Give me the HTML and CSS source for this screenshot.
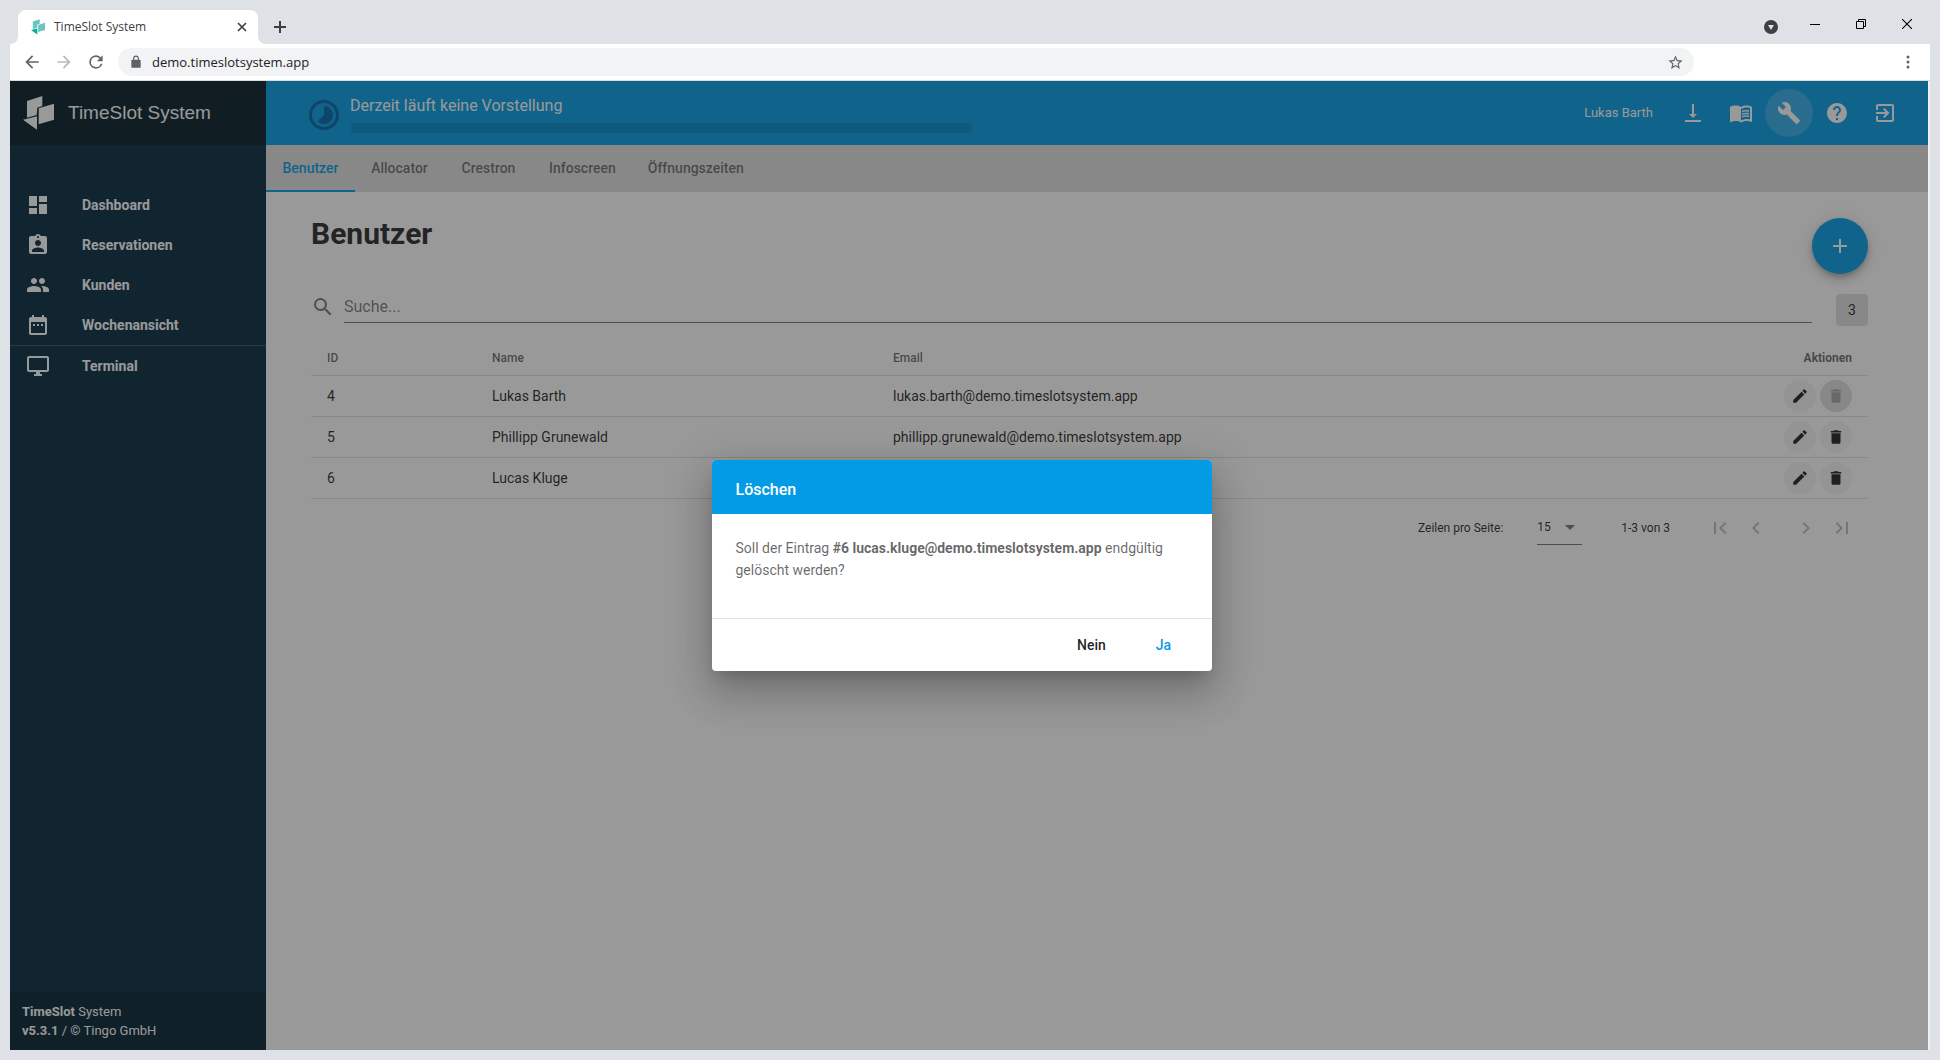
FILE: index.html
```html
<!DOCTYPE html>
<html lang="de">
<head>
<meta charset="utf-8">
<title>TimeSlot System</title>
<link rel="stylesheet" href="styles.css">
</head>
<body>
<svg class="sprite" aria-hidden="true">
  <symbol id="edit" viewBox="0 0 24 24"><path d="M3 17.25V21h3.75L17.81 9.94l-3.75-3.75L3 17.25zM20.71 7.04a1 1 0 0 0 0-1.41l-2.34-2.34a1 1 0 0 0-1.41 0l-1.83 1.83 3.75 3.75 1.83-1.83z"/></symbol>
  <symbol id="delete" viewBox="0 0 24 24"><path d="M6 19c0 1.1.9 2 2 2h8c1.100 0 2-.9 2-2V7H6v12zM19 4h-3.500l-1-1h-5l-1 1H5v2h14V4z"/></symbol>
  <symbol id="logo" viewBox="0 0 31 34"><path d="M4 5 19.300 0v10l-5 1.700-.6 7.300L4 21.700zM15.700 12.300 31 7.700v16l-15.300 4.600zM0 23.700l14-3.400v13.400z"/></symbol>
</svg>

<header class="browser">
  <div class="tabstrip">
    <div class="browser-tab">
      <svg class="favicon" viewBox="0 0 31 34"><path fill="#6cc5c0" d="M4 5 19.300 0v10l-5 1.700-.6 7.300L4 21.700zM15.700 12.300 31 7.700v16l-15.300 4.600z"/><path fill="#00b09b" d="M0 23.700l14-3.400v13.400z"/></svg>
      <span class="browser-tab-title">TimeSlot System</span>
      <button class="plain" aria-label="Tab schließen"><svg width="10" height="10" viewBox="0 0 10 10"><path d="M1 1l8 8M9 1L1 9" stroke="#3c4043" stroke-width="1.700"/></svg></button>
    </div>
    <button class="plain new-tab" aria-label="Neuer Tab"><svg width="12" height="12" viewBox="0 0 12 12"><path d="M6 0v12M0 6h12" stroke="#3c4043" stroke-width="2"/></svg></button>
    <div class="window-controls">
      <button class="plain tab-search" aria-label="Tabs suchen"><svg width="14" height="14" viewBox="0 0 14 14"><circle cx="7" cy="7" r="7" fill="#3c4043"/><path d="M4 5h6L7 10z" fill="#dee1e6"/></svg></button>
      <button class="plain" aria-label="Minimieren"><svg width="10" height="10" viewBox="0 0 10 10"><path d="M0 5.500h10" stroke="#000"/></svg></button>
      <button class="plain" aria-label="Verkleinern"><svg width="10" height="10" viewBox="0 0 10 10"><path d="M.5 2.500h7v7h-7zM2.500 2.500v-2h7v7h-2" fill="none" stroke="#000"/></svg></button>
      <button class="plain" aria-label="Schließen"><svg width="10" height="10" viewBox="0 0 10 10"><path d="M0 0l10 10M10 0L0 10" stroke="#000" stroke-width="1.100"/></svg></button>
    </div>
  </div>
  <div class="toolbar">
    <button class="plain" aria-label="Zurück"><svg width="20" height="20" viewBox="0 0 24 24"><path fill="#5f6368" d="M20 11H7.830l5.590-5.590L12 4l-8 8 8 8 1.410-1.410L7.830 13H20v-2z"/></svg></button>
    <button class="plain" aria-label="Vorwärts"><svg width="20" height="20" viewBox="0 0 24 24"><path fill="#bababc" d="M12 4l-1.410 1.410L16.170 11H4v2h12.170l-5.580 5.590L12 20l8-8z"/></svg></button>
    <button class="plain" aria-label="Neu laden"><svg width="20" height="20" viewBox="0 0 24 24"><path fill="#5f6368" d="M17.650 6.350A7.960 7.960 0 0 0 12 4a8 8 0 1 0 7.730 10h-2.080A6 6 0 1 1 12 6c1.660 0 3.140.69 4.220 1.780L13 11h7V4l-2.350 2.350z"/></svg></button>
    <div class="omnibox">
      <svg width="14" height="14" viewBox="0 0 24 24"><path fill="#5f6368" d="M18 8h-1V6A5 5 0 0 0 7 6v2H6a2 2 0 0 0-2 2v10c0 1.100.9 2 2 2h12a2 2 0 0 0 2-2V10a2 2 0 0 0-2-2zM9 8V6a3 3 0 0 1 6 0v2z"/></svg>
      <input class="url" aria-label="Adresse" value="demo.timeslotsystem.app">
      <button class="plain" aria-label="Lesezeichen"><svg width="17" height="17" viewBox="0 0 24 24"><path fill="#5f6368" d="M22 9.240l-7.190-.62L12 2 9.190 8.630 2 9.240l5.460 4.730L5.820 21 12 17.270 18.180 21l-1.630-7.030L22 9.240zM12 15.400l-3.760 2.270 1-4.280-3.320-2.880 4.380-.38L12 6.100l1.710 4.040 4.380.38-3.320 2.880 1 4.280L12 15.400z"/></svg></button>
    </div>
    <button class="plain menu" aria-label="Menü"><svg width="4" height="14" viewBox="0 0 4 14" fill="#5f6368"><circle cx="2" cy="2" r="1.500"/><circle cx="2" cy="7" r="1.500"/><circle cx="2" cy="12" r="1.500"/></svg></button>
  </div>
</header>

<div class="app">
  <aside class="sidebar">
    <div class="brand"><svg class="brand-logo"><use href="#logo"/></svg><span>TimeSlot System</span></div>
    <nav class="nav">
      <a href="#"><svg class="icon" viewBox="0 0 24 24"><path d="M3 13h8V3H3v10zm0 8h8v-6H3v6zm10 0h8V11h-8v10zm0-18v6h8V3h-8z"/></svg>Dashboard</a>
      <a href="#"><svg class="icon" viewBox="0 0 24 24"><path d="M19 3h-4.180C14.400 1.840 13.300 1 12 1c-1.300 0-2.400.84-2.820 2H5c-1.100 0-2 .9-2 2v14c0 1.100.9 2 2 2h14c1.100 0 2-.9 2-2V5c0-1.100-.9-2-2-2zm-7 0c.55 0 1 .45 1 1s-.45 1-1 1-1-.45-1-1 .45-1 1-1zm0 4c1.660 0 3 1.340 3 3s-1.340 3-3 3-3-1.340-3-3 1.340-3 3-3zm6 12H6v-1.400c0-2 4-3.100 6-3.100s6 1.100 6 3.100V19z"/></svg>Reservationen</a>
      <a href="#"><svg class="icon" viewBox="0 0 24 24"><path d="M16 11c1.660 0 2.990-1.340 2.990-3S17.660 5 16 5c-1.660 0-3 1.340-3 3s1.340 3 3 3zm-8 0c1.660 0 2.990-1.340 2.990-3S9.660 5 8 5C6.340 5 5 6.340 5 8s1.340 3 3 3zm0 2c-2.330 0-7 1.170-7 3.500V19h14v-2.500c0-2.330-4.670-3.500-7-3.500zm8 0c-.29 0-.62.02-.97.05 1.160.84 1.970 1.970 1.970 3.450V19h6v-2.500c0-2.330-4.670-3.500-7-3.500z"/></svg>Kunden</a>
      <a href="#"><svg class="icon" viewBox="0 0 24 24"><path d="M9 11H7v2h2v-2zm4 0h-2v2h2v-2zm4 0h-2v2h2v-2zm2-7h-1V2h-2v2H8V2H6v2H5c-1.110 0-1.990.9-1.990 2L3 20c0 1.100.89 2 2 2h14c1.100 0 2-.9 2-2V6c0-1.100-.9-2-2-2zm0 16H5V9h14v11z"/></svg>Wochenansicht</a>
      <hr>
      <a href="#"><svg class="icon" viewBox="0 0 24 24"><path d="M21 2H3c-1.100 0-2 .9-2 2v12c0 1.100.9 2 2 2h7v2H8v2h8v-2h-2v-2h7c1.100 0 2-.9 2-2V4c0-1.100-.9-2-2-2zm0 14H3V4h18v12z"/></svg>Terminal</a>
    </nav>
    <footer class="about"><div><b>TimeSlot</b> System</div><div><b>v5.3.1</b> / © Tingo GmbH</div></footer>
  </aside>

  <div class="main">
    <header class="topbar">
      <svg class="show-icon" viewBox="0 0 24 24"><path d="M16.240 7.760C15.070 6.590 13.540 6 12 6v6l-4.240 4.240c2.340 2.340 6.140 2.340 8.490 0 2.340-2.340 2.340-6.140-.01-8.480zM12 2C6.480 2 2 6.480 2 12s4.480 10 10 10 10-4.480 10-10S17.520 2 12 2zm0 18c-4.420 0-8-3.580-8-8s3.580-8 8-8 8 3.580 8 8-3.580 8-8 8z"/></svg>
      <div class="show"><span>Derzeit läuft keine Vorstellung</span><div class="show-bar"></div></div>
      <span class="user">Lukas Barth</span>
      <div class="tools">
        <button class="tool" aria-label="Herunterladen"><svg class="icon" viewBox="0 0 24 24"><path d="M16 13h-3V3h-2v10H8l4 4 4-4zM4 19v2h16v-2H4z"/></svg></button>
        <button class="tool" aria-label="Handbuch"><svg class="icon" viewBox="0 0 24 24"><path d="M21 5c-1.110-.35-2.330-.5-3.500-.5-1.950 0-4.050.4-5.500 1.500-1.450-1.100-3.550-1.500-5.500-1.500S2.450 4.900 1 6v14.650c0 .25.25.5.5.5.1 0 .15-.05.25-.05C3.100 20.450 5.050 20 6.500 20c1.950 0 4.050.4 5.500 1.500 1.350-.85 3.800-1.500 5.500-1.500 1.650 0 3.350.3 4.750 1.050.1.05.15.05.25.05.25 0 .5-.25.5-.5V6c-.6-.45-1.250-.75-2-1zm0 13.500c-1.100-.35-2.300-.5-3.500-.5-1.700 0-4.150.65-5.500 1.500V8c1.350-.85 3.800-1.500 5.500-1.500 1.200 0 2.400.15 3.500.5v11.500z"/><path d="M17.500 10.500c.88 0 1.730.09 2.500.26V9.240c-.79-.15-1.640-.24-2.500-.24-1.700 0-3.240.29-4.500.83v1.660c1.130-.64 2.700-.99 4.500-.99zM13 12.490v1.660c1.130-.64 2.700-.99 4.500-.99.88 0 1.730.09 2.500.26V11.900c-.79-.15-1.640-.24-2.500-.24-1.700 0-3.240.3-4.500.83zM17.500 14.330c-1.700 0-3.240.29-4.500.83v1.660c1.130-.64 2.700-.99 4.500-.99.88 0 1.730.09 2.500.26v-1.520c-.79-.16-1.640-.24-2.500-.24z"/></svg></button>
        <button class="tool active" aria-label="Einstellungen"><svg class="icon" viewBox="0 0 24 24"><path d="M22.700 19l-9.100-9.100c.9-2.300.4-5-1.500-6.900-2-2-5-2.400-7.400-1.300L9 6 6 9 1.600 4.700C.4 7.100.9 10.100 2.900 12.100c1.900 1.900 4.600 2.400 6.900 1.500l9.100 9.100c.4.4 1 .4 1.400 0l2.300-2.300c.5-.4.5-1.100.1-1.400z"/></svg></button>
        <button class="tool" aria-label="Hilfe"><svg class="icon" viewBox="0 0 24 24"><path d="M12 2C6.480 2 2 6.480 2 12s4.480 10 10 10 10-4.480 10-10S17.520 2 12 2zm1 17h-2v-2h2v2zm2.070-7.750l-.9.920C13.450 12.900 13 13.500 13 15h-2v-.5c0-1.100.45-2.100 1.170-2.830l1.240-1.260c.37-.36.59-.86.59-1.410 0-1.100-.9-2-2-2s-2 .9-2 2H8c0-2.210 1.790-4 4-4s4 1.790 4 4c0 .88-.36 1.680-.93 2.250z"/></svg></button>
        <button class="tool" aria-label="Abmelden"><svg class="icon" viewBox="0 0 24 24"><path d="M10.090 15.590L11.500 17l5-5-5-5-1.410 1.410L12.670 11H3v2h9.670l-2.580 2.590zM19 3H5c-1.110 0-2 .9-2 2v4h2V5h14v14H5v-4H3v4c0 1.100.89 2 2 2h14c1.100 0 2-.9 2-2V5c0-1.100-.9-2-2-2z"/></svg></button>
      </div>
    </header>
    <nav class="tabs">
      <a class="current" href="#">Benutzer</a><a href="#">Allocator</a><a href="#">Crestron</a><a href="#">Infoscreen</a><a href="#">Öffnungszeiten</a>
    </nav>
    <main class="content">
      <div class="heading">
        <h1>Benutzer</h1>
        <button class="fab" aria-label="Neuer Benutzer"><svg class="icon" viewBox="0 0 24 24"><path d="M19 13h-6v6h-2v-6H5v-2h6V5h2v6h6v2z"/></svg></button>
      </div>
      <div class="filter">
        <label class="search">
          <svg class="icon" viewBox="0 0 24 24"><path d="M15.500 14h-.79l-.28-.27A6.470 6.470 0 0 0 16 9.500 6.500 6.500 0 1 0 9.500 16c1.610 0 3.090-.59 4.230-1.570l.27.28v.79l5 4.990L20.490 19l-4.990-5zm-6 0C7.010 14 5 11.990 5 9.500S7.010 5 9.500 5 14 7.010 14 9.500 11.990 14 9.500 14z"/></svg>
          <input type="text" placeholder="Suche..." aria-label="Suche">
        </label>
        <span class="count">3</span>
      </div>
      <table class="users">
        <colgroup><col class="col-id"><col class="col-name"><col><col></colgroup>
        <thead><tr><th>ID</th><th>Name</th><th>Email</th><th class="end">Aktionen</th></tr></thead>
        <tbody>
          <tr><td>4</td><td>Lukas Barth</td><td>lukas.barth@demo.timeslotsystem.app</td><td><div class="actions"><button aria-label="Bearbeiten"><svg><use href="#edit"/></svg></button><button disabled aria-label="Löschen"><svg><use href="#delete"/></svg></button></div></td></tr>
          <tr><td>5</td><td>Phillipp Grunewald</td><td>phillipp.grunewald@demo.timeslotsystem.app</td><td><div class="actions"><button aria-label="Bearbeiten"><svg><use href="#edit"/></svg></button><button aria-label="Löschen"><svg><use href="#delete"/></svg></button></div></td></tr>
          <tr><td>6</td><td>Lucas Kluge</td><td>lucas.kluge@demo.timeslotsystem.app</td><td><div class="actions"><button aria-label="Bearbeiten"><svg><use href="#edit"/></svg></button><button aria-label="Löschen"><svg><use href="#delete"/></svg></button></div></td></tr>
        </tbody>
      </table>
      <div class="pager">
        <label for="rows">Zeilen pro Seite:</label>
        <div class="select"><select id="rows"><option>15</option></select><svg width="10" height="5" viewBox="0 0 10 5"><path d="M0 0h10L5 5z"/></svg></div>
        <span class="range">1-3 von 3</span>
        <div class="pages">
          <button disabled aria-label="Erste Seite"><svg class="icon" viewBox="0 0 24 24"><path d="M18.410 16.590L13.820 12l4.590-4.590L17 6l-6 6 6 6zM6 6h2v12H6z"/></svg></button>
          <button disabled aria-label="Vorherige Seite"><svg class="icon" viewBox="0 0 24 24"><path d="M15.410 7.410L14 6l-6 6 6 6 1.410-1.410L10.830 12z"/></svg></button>
          <button class="next" disabled aria-label="Nächste Seite"><svg class="icon" viewBox="0 0 24 24"><path d="M10 6L8.590 7.410 13.170 12l-4.580 4.590L10 18l6-6z"/></svg></button>
          <button disabled aria-label="Letzte Seite"><svg class="icon" viewBox="0 0 24 24"><path d="M5.590 7.410L10.180 12l-4.590 4.590L7 18l6-6-6-6zM16 6h2v12h-2z"/></svg></button>
        </div>
      </div>
    </main>
  </div>

  <div class="overlay">
    <div class="dialog" role="dialog" aria-modal="true" aria-labelledby="dialog-title">
      <h2 id="dialog-title">Löschen</h2>
      <p>Soll der Eintrag <b>#6 lucas.kluge@demo.timeslotsystem.app</b> endgültig gelöscht werden?</p>
      <div class="dialog-actions"><button>Nein</button><button class="primary">Ja</button></div>
    </div>
  </div>
</div>
</body>
</html>
```
FILE: styles.css
```css
* { box-sizing: border-box; }

body {
  margin: 0;
  min-height: 100vh;
  padding: 0 10px 10px;
  display: flex;
  flex-direction: column;
  background: #dee1e6;
  color: rgba(0, 0, 0, .87);
  font: 14px/20px Roboto, sans-serif;
}

button, input, select { font: inherit; color: inherit; margin: 0; padding: 0; border: 0; background: none; }
a { color: inherit; text-decoration: none; }
svg { display: block; flex: none; }
.sprite { position: absolute; width: 0; height: 0; }
.icon { width: 24px; height: 24px; fill: currentColor; }
.plain { display: flex; align-items: center; justify-content: center; }

/* Browser frame */
.browser { font-family: "Open Sans", sans-serif; }
.tabstrip { display: flex; height: 44px; padding: 10px 0 0 8px; }
.browser-tab {
  position: relative;
  display: flex;
  align-items: center;
  width: 240px;
  padding: 0 11px 0 13px;
  border-radius: 8px 8px 0 0;
  background: #fff;
  font-size: 12px;
  color: #3c4043;
}
.browser-tab::before, .browser-tab::after {
  content: "";
  position: absolute;
  bottom: 0;
  width: 8px;
  height: 8px;
}
.browser-tab::before { left: -8px; background: radial-gradient(circle at 0 0, transparent 8px, #fff 8px); }
.browser-tab::after { right: -8px; background: radial-gradient(circle at 100% 0, transparent 8px, #fff 8px); }
.favicon { width: 14px; height: 16px; }
.browser-tab-title { flex: 1; margin-left: 9px; }
.new-tab { width: 28px; margin-left: 8px; }
.window-controls { display: flex; align-items: flex-start; margin-left: auto; }
.window-controls .plain { width: 46px; height: 28px; }
.window-controls .tab-search { width: 42px; height: 34px; }

.toolbar {
  display: flex;
  align-items: center;
  height: 37px;
  padding: 0 12px;
  background: #fff;
  border-bottom: 1px solid #dadce0;
}
.toolbar > .plain { width: 20px; margin-right: 12px; }
.toolbar > .menu { width: 20px; margin: 0 0 0 auto; }
.omnibox {
  display: flex;
  align-items: center;
  flex: 0 1 1576px;
  height: 28px;
  padding: 0 10px 0 11px;
  border-radius: 14px;
  background: #f1f3f4;
  font-size: 13px;
  color: #202124;
}
.url { flex: 1; margin-left: 9px; }

/* App shell */
.app { position: relative; display: flex; flex: 1; margin-right: 2px; box-shadow: 2px 0 #f1f1f1; background: #fff; }
.sidebar { display: flex; flex-direction: column; width: 256px; flex: none; background: #042a40; color: #fff; }
.brand {
  display: flex;
  align-items: center;
  gap: 14px;
  height: 64px;
  padding: 0 13px;
  background: #021d27;
  font: 19px/24px "Liberation Sans", sans-serif;
}
.brand-logo { width: 31px; height: 34px; fill: #fff; }
.nav { flex: 1; padding-top: 40px; font-weight: 700; }
.nav a { display: flex; align-items: center; gap: 32px; height: 40px; padding: 0 16px; }
.nav hr { margin: 0; border: 0; border-top: 1px solid rgba(255, 255, 255, .2); }
.about { padding: 10px 12px; background: #022130; font-size: 13px; line-height: 19px; }

.main { flex: 1; min-width: 0; }
.topbar { display: flex; align-items: center; height: 64px; padding: 0 19px 0 40px; background: #039be5; color: #fff; }
.show-icon { width: 36px; height: 36px; fill: #0064a4; margin-top: 4px; }
.show { flex: 0 1 622px; margin-left: 8px; padding-top: 3px; font-size: 16px; }
.show-bar { height: 10px; margin: 7px 0 0 1px; background: #038bcd; }
.user { margin-left: auto; margin-right: 16px; font-size: 13px; }
.tools { display: flex; }
.tool { display: flex; align-items: center; justify-content: center; width: 48px; height: 48px; border-radius: 50%; }
.tool.active { background: rgba(255, 255, 255, .18); }

.tabs { display: flex; height: 47px; background: #e0e0e0; font-weight: 500; color: rgba(0, 0, 0, .54); }
.tabs a { display: flex; align-items: center; justify-content: center; min-width: 89px; padding: 0 16px; border-bottom: 2px solid transparent; }
.tabs .current { color: #039be5; border-color: #039be5; }

.content { padding: 26px 60px 26px 45px; }
.heading { display: flex; justify-content: space-between; align-items: flex-start; }
h1 { margin: 0; font-size: 30px; line-height: 32px; font-weight: 700; }
.fab {
  display: flex;
  align-items: center;
  justify-content: center;
  width: 56px;
  height: 56px;
  border-radius: 50%;
  background: #039be5;
  color: #fff;
  box-shadow: 0 3px 5px -1px rgba(0, 0, 0, .2), 0 6px 10px rgba(0, 0, 0, .14), 0 1px 18px rgba(0, 0, 0, .12);
}
.filter { display: flex; align-items: flex-start; gap: 24px; padding-top: 16px; }
.search { display: flex; flex: 1; align-items: center; gap: 9px; color: rgba(0, 0, 0, .54); }
.search input { flex: 1; height: 33px; border-bottom: 1px solid rgba(0, 0, 0, .54); font-size: 16px; }
.search input::placeholder { color: rgba(0, 0, 0, .54); opacity: 1; }
.count { width: 32px; height: 32px; margin-top: 4px; border-radius: 4px; background: #e0e0e0; line-height: 32px; text-align: center; }

.users { width: 100%; margin-top: 16px; border-collapse: collapse; }
.col-id { width: 165px; }
.col-name { width: 401px; }
th { height: 33px; padding: 0 16px; text-align: left; font-size: 12px; font-weight: 500; color: rgba(0, 0, 0, .6); }
th.end { text-align: right; font-weight: 700; }
td { height: 41px; padding: 0 16px; }
tr { border-bottom: 1px solid rgba(0, 0, 0, .12); }
.actions { display: flex; justify-content: flex-end; gap: 4px; }
.actions button { display: flex; align-items: center; justify-content: center; width: 32px; height: 32px; border-radius: 50%; background: #f5f5f5; }
.actions svg { width: 18px; height: 18px; fill: rgba(0, 0, 0, .87); }
.actions button:disabled { background: #e0e0e0; }
.actions button:disabled svg { fill: rgba(0, 0, 0, .26); }

.pager { display: flex; align-items: center; justify-content: flex-end; height: 58px; font-size: 12px; }
.select { display: flex; align-items: center; width: 45px; height: 35px; margin-left: 34px; border-bottom: 1px solid rgba(0, 0, 0, .54); fill: rgba(0, 0, 0, .54); }
.select select { appearance: none; flex: 1; }
.select svg { margin-right: 7px; }
.range { margin: 0 32px 0 39px; }
.pages { display: flex; padding-right: 8px; color: rgba(0, 0, 0, .26); }
.pages button { width: 36px; padding: 0 6px; }
.pages .next { margin-left: 14px; }

/* Confirmation dialog */
.overlay {
  position: absolute;
  inset: 0;
  display: flex;
  align-items: center;
  justify-content: center;
  padding-right: 15px;
  background: rgba(33, 33, 33, .46);
}
.dialog {
  width: 500px;
  border-radius: 4px;
  overflow: hidden;
  background: #fff;
  box-shadow: 0 11px 15px -7px rgba(0, 0, 0, .2), 0 24px 38px 3px rgba(0, 0, 0, .14), 0 9px 46px 8px rgba(0, 0, 0, .12);
}
.dialog h2 { margin: 0; padding: 18px 24px 12px; background: #039be5; color: #fff; font-size: 16px; line-height: 24px; font-weight: 500; }
.dialog p { margin: 0; padding: 23px 24px 37px; line-height: 22px; color: rgba(0, 0, 0, .6); }
.dialog-actions { display: flex; justify-content: flex-end; gap: 8px; padding: 8px 16px; border-top: 1px solid rgba(0, 0, 0, .12); }
.dialog-actions button { min-width: 64px; height: 36px; font-weight: 500; }
.dialog-actions .primary { color: #039be5; }
```
